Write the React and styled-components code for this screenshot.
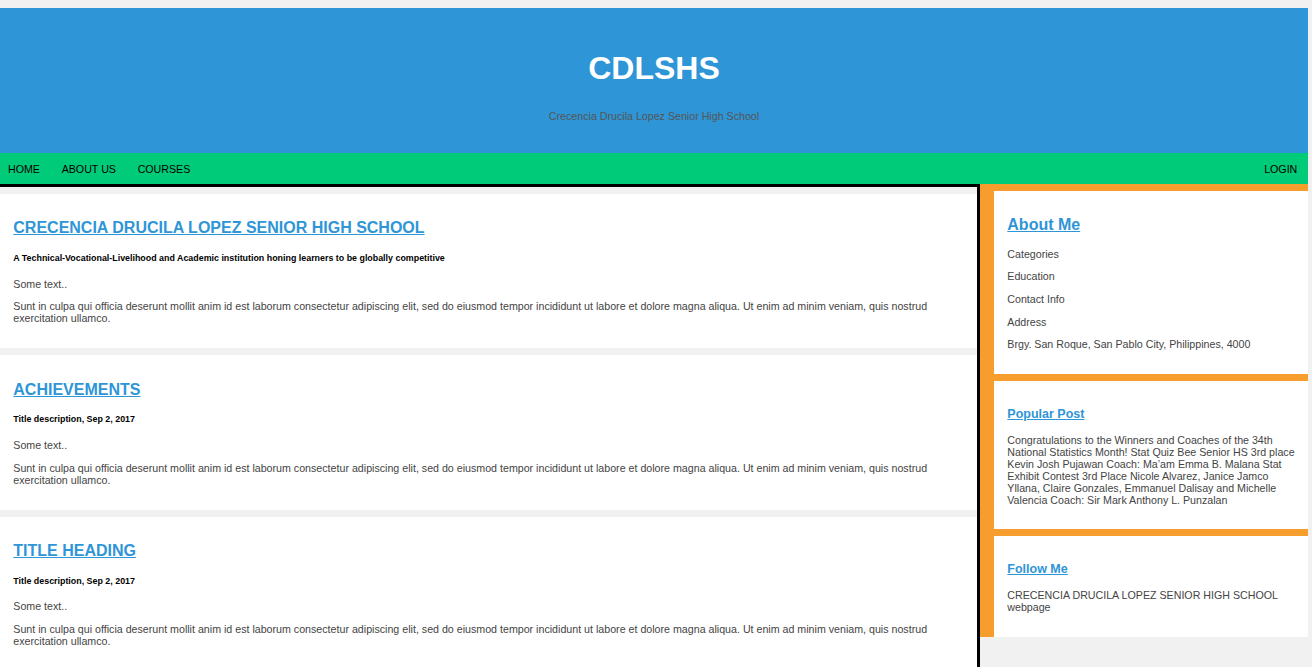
import React from "react";
import styled, { createGlobalStyle } from "styled-components";

const blue = "#2e95d7";
const green = "#00cb78";
const orange = "#f79d2e";
const text = "#444";

const GlobalStyle = createGlobalStyle`
  html, body {
    margin: 0;
    background: #f1f1f1;
  }
  body {
    padding: 8px 4px 0 0;
    font-family: "Liberation Sans", Arial, sans-serif;
    font-size: 10.67px;
    color: ${text};
  }
`;

const posts = [
  {
    title: "CRECENCIA DRUCILA LOPEZ SENIOR HIGH SCHOOL",
    sub: "A Technical-Vocational-Livelihood and Academic institution honing learners to be globally competitive",
  },
  { title: "ACHIEVEMENTS", sub: "Title description, Sep 2, 2017" },
  { title: "TITLE HEADING", sub: "Title description, Sep 2, 2017" },
];

const lorem =
  "Sunt in culpa qui officia deserunt mollit anim id est laborum consectetur adipiscing elit, sed do eiusmod tempor incididunt ut labore et dolore magna aliqua. Ut enim ad minim veniam, quis nostrud exercitation ullamco.";

const App = () => {
  return (
    <>
      <GlobalStyle />
      <Header>
        <h1>CDLSHS</h1>
        <p>Crecencia Drucila Lopez Senior High School</p>
      </Header>
      <Nav>
        <NavLink href="#">HOME</NavLink>
        <NavLink href="#">ABOUT US</NavLink>
        <NavLink href="#">COURSES</NavLink>
        <NavLink href="#" $right>
          LOGIN
        </NavLink>
      </Nav>
      <Row>
        <LeftColumn>
          {posts.map((post) => (
            <Card key={post.title}>
              <Title>
                <a href="#">{post.title}</a>
              </Title>
              <SubTitle>{post.sub}</SubTitle>
              <Text>Some text..</Text>
              <Text>{lorem}</Text>
            </Card>
          ))}
        </LeftColumn>
        <RightColumn>
          <Card>
            <Title>
              <a href="#">About Me</a>
            </Title>
            <Text>Categories</Text>
            <Text>Education</Text>
            <Text>Contact Info</Text>
            <Text>Address</Text>
            <Text>Brgy. San Roque, San Pablo City, Philippines, 4000</Text>
          </Card>
          <Card>
            <SmallTitle>
              <a href="#">Popular Post</a>
            </SmallTitle>
            <Text>
              Congratulations to the Winners and Coaches of the 34th National
              Statistics Month! Stat Quiz Bee Senior HS 3rd place Kevin Josh
              Pujawan Coach: Ma’am Emma B. Malana Stat Exhibit Contest 3rd Place
              Nicole Alvarez, Janice Jamco Yllana, Claire Gonzales, Emmanuel
              Dalisay and Michelle Valencia Coach: Sir Mark Anthony L. Punzalan
            </Text>
          </Card>
          <Card>
            <SmallTitle>
              <a href="#">Follow Me</a>
            </SmallTitle>
            <Text>CRECENCIA DRUCILA LOPEZ SENIOR HIGH SCHOOL webpage</Text>
          </Card>
        </RightColumn>
      </Row>
    </>
  );
};

export default App;

const Header = styled.header`
  background: ${blue};
  text-align: center;
  padding: 21px 0 20.4px;

  h1 {
    margin: 21px 0 23px;
    font-size: 32px;
    font-weight: bold;
    color: #fff;
  }

  p {
    margin: 0 0 10.67px;
    color: #555;
  }
`;

const Nav = styled.nav`
  display: flex;
  align-items: center;
  gap: 21.7px;
  height: 31px;
  padding: 0 10.7px 0 8px;
  background: ${green};
`;

const NavLink = styled.a`
  color: #000;
  text-decoration: none;
  font-size: 10.67px;
  margin-left: ${(p) => (p.$right ? "auto" : "0")};
`;

const Row = styled.div`
  display: flex;
  align-items: flex-start;
`;

const LeftColumn = styled.main`
  box-sizing: border-box;
  width: 980px;
  border-top: 3px solid #000;
  border-right: 3px solid #000;
  padding-top: 7px;
  display: flex;
  flex-direction: column;
  gap: 7px;
`;

const RightColumn = styled.aside`
  flex: 1;
  background: ${orange};
  padding: 7px 0 0 14px;
  display: flex;
  flex-direction: column;
  gap: 7px;
`;

const Card = styled.section`
  background: #fff;
  padding: 13.3px;
`;

const Title = styled.h2`
  font-size: 16px;
  margin: 12px 0 13.3px;

  a {
    color: ${blue};
  }
`;

const SmallTitle = styled.h3`
  font-size: 12.5px;
  margin: 12.5px 0;

  a {
    color: ${blue};
  }
`;

const SubTitle = styled.h5`
  font-size: 8.9px;
  color: #000;
  margin: 15.6px 0 14.8px;
`;

const Text = styled.p`
  margin: 10.67px 0;

  ${SubTitle} + & {
    margin-top: 0;
  }
`;
